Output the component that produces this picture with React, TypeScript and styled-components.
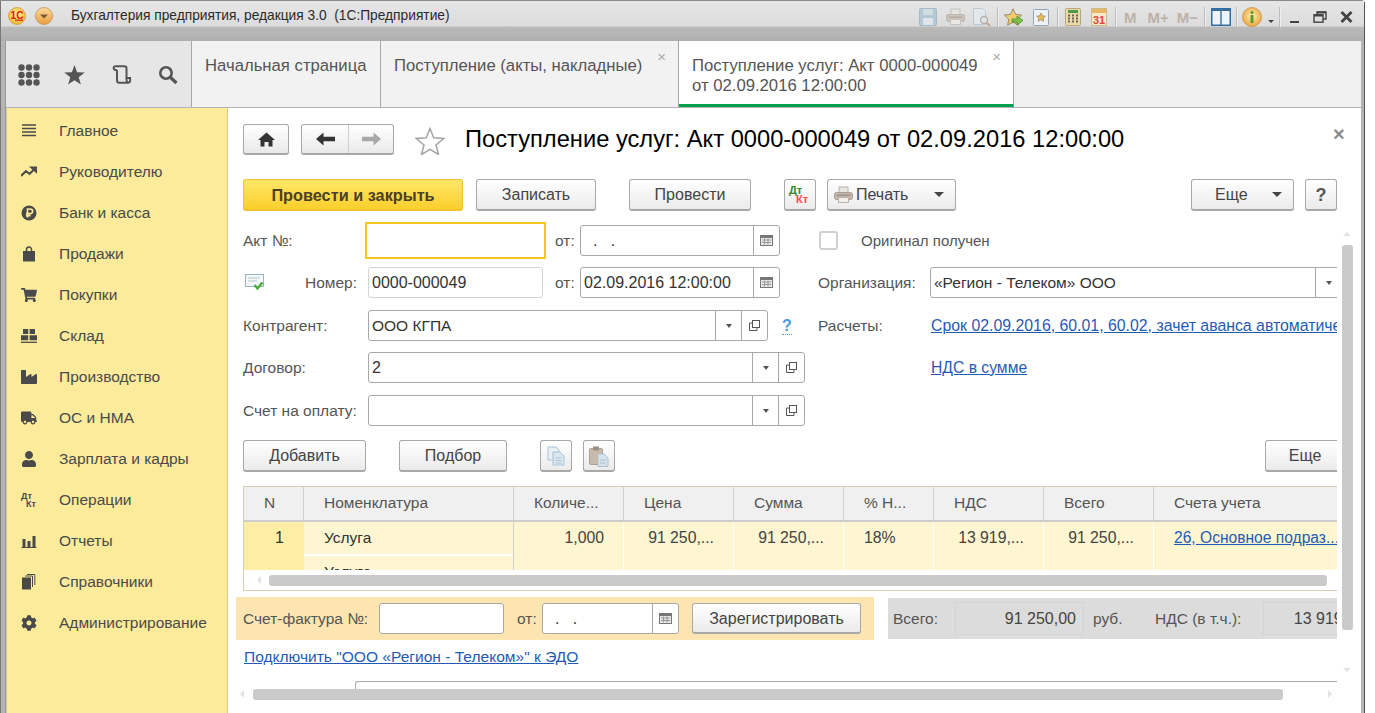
import React from "react";
import styled, { createGlobalStyle } from "styled-components";
import { FaCog, FaIndustry, FaShoppingCart, FaTruck, FaUser } from "react-icons/fa";

const GlobalStyle = createGlobalStyle`
  html, body {
    margin: 0;
    padding: 0;
    background: #fff;
    overflow: hidden;
  }
  body {
    font-family: "Liberation Sans", Arial, sans-serif;
    font-size: 15.5px;
    color: #4a4a4a;
  }
`;

/* ---- icons ---- */

const Svg = ({ w = 16, h = 16, vb, children }: { w?: number; h?: number; vb?: string; children: React.ReactNode }) => (
  <svg width={w} height={h} viewBox={vb ?? `0 0 ${w} ${h}`} style={{ display: "block", flex: "none" }}>
    {children}
  </svg>
);

const LogoIcon = () => (
  <Svg w={18} h={18}>
    <defs>
      <radialGradient id="logoBg" cx="50%" cy="40%" r="60%">
        <stop offset="0" stopColor="#fff09a" />
        <stop offset="1" stopColor="#f5b62a" />
      </radialGradient>
    </defs>
    <circle cx="9" cy="9" r="8.5" fill="url(#logoBg)" stroke="#c9882b" strokeWidth="0.6" />
    <text x="9" y="12" textAnchor="middle" fontFamily="Liberation Sans" fontWeight="700" fontSize="10" fill="#d3211a">1С</text>
    <path d="M7 13.200h8" stroke="#d3211a" strokeWidth="1.200" />
  </Svg>
);

const MenuArrowIcon = () => (
  <Svg w={18} h={18}>
    <defs>
      <linearGradient id="menuBg" x1="0" y1="0" x2="0" y2="1">
        <stop offset="0" stopColor="#fbd9a0" />
        <stop offset="1" stopColor="#eb9f3e" />
      </linearGradient>
    </defs>
    <circle cx="9" cy="9" r="8.5" fill="url(#menuBg)" stroke="#bd8b4d" strokeWidth="0.7" />
    <path d="M5 7.5h8L9 11.5z" fill="#7a5a34" />
  </Svg>
);

const SaveIcon = () => (
  <Svg w={18} h={18}>
    <rect x="0.5" y="0.5" width="17" height="17" rx="1" fill="#9dbcd2" stroke="#86a7bf" />
    <rect x="4" y="1" width="10" height="6" fill="#c8d9e4" />
    <rect x="4" y="10" width="10" height="7" fill="#dfe8ee" />
  </Svg>
);

const PrintIcon = ({ w = 19, h = 18 }: { w?: number; h?: number }) => (
  <Svg w={w} h={h} vb="0 0 19 18">
    <rect x="5" y="1" width="9" height="6" fill="#e9e6e2" stroke="#b9b3ac" />
    <rect x="0.5" y="6.5" width="18" height="7" rx="2" fill="#c4b8ac" stroke="#ab9f94" />
    <rect x="4.5" y="11.5" width="10" height="5" fill="#f2f0ed" stroke="#b9b3ac" />
    <rect x="2.5" y="8.5" width="14" height="1.5" fill="#9b9188" />
  </Svg>
);

const PreviewIcon = () => (
  <Svg w={19} h={19}>
    <path d="M1.5.5h9l3 3v13h-12z" fill="#e5edf3" stroke="#a8bccb" />
    <circle cx="12" cy="12" r="3.5" fill="#dfe5e8" stroke="#a1958a" strokeWidth="1.3" />
    <path d="M14.5 14.5l3.5 3.5" stroke="#a98a72" strokeWidth="2" />
  </Svg>
);

const StarArrowIcon = () => (
  <Svg w={20} h={19}>
    <path d="M9 .8l2.6 5.6 6 .7-4.4 4.1 1.2 6-5.4-3-5.4 3 1.2-6L.4 7.1l6-.7z" fill="#f2cf6b" stroke="#8a8266" strokeWidth="0.9" />
    <path d="M8 11h5V8l6 4.5-6 4.5v-3H8z" fill="#7fc24a" stroke="#4d8a2c" strokeWidth="0.8" />
  </Svg>
);

const DocStarIcon = () => (
  <Svg w={16} h={18}>
    <rect x="0.5" y="1.5" width="15" height="16" rx="1" fill="#eef2f5" stroke="#8fa6b8" />
    <path d="M8 5l1.4 2.8 3 .4-2.2 2.1.6 3L8 11.8l-2.8 1.5.6-3-2.2-2.1 3-.4z" fill="#e6bd55" stroke="#8a7a50" strokeWidth="0.6" />
  </Svg>
);

const CalcIcon = () => (
  <Svg w={16} h={18}>
    <rect x="0.5" y="0.5" width="15" height="17" rx="1" fill="#ecd9a8" stroke="#b8a67a" />
    <rect x="3" y="2" width="10" height="3" fill="#4c9a4c" />
    <path d="M3 7.5h2M7 7.5h2M11 7.5h2M3 10.5h2M7 10.5h2M11 10.5h2M3 13.5h2M7 13.5h2M11 13.5h2" stroke="#6d6455" strokeWidth="2" />
  </Svg>
);

const CalendarIcon = () => (
  <Svg w={16} h={18}>
    <rect x="0.5" y="0.5" width="15" height="17" fill="#f6e9cc" stroke="#cdb98e" />
    <rect x="1" y="1" width="14" height="4" fill="#e8b765" />
    <text x="8" y="15.5" textAnchor="middle" fontFamily="Liberation Sans" fontWeight="700" fontSize="11" fill="#e4432d">31</text>
  </Svg>
);

const PaneIcon = () => (
  <Svg w={20} h={18}>
    <rect x="0.75" y="0.75" width="18.5" height="16.5" fill="#eef4f9" stroke="#356f9f" strokeWidth="1.5" />
    <rect x="1" y="1" width="18" height="2" fill="#356f9f" />
    <path d="M10 2v15" stroke="#356f9f" strokeWidth="1.4" />
  </Svg>
);

const InfoIcon = () => (
  <Svg w={20} h={20}>
    <defs>
      <radialGradient id="infoBg" cx="50%" cy="45%" r="60%">
        <stop offset="0" stopColor="#fdeeb4" />
        <stop offset="1" stopColor="#eaa136" />
      </radialGradient>
    </defs>
    <circle cx="10" cy="10" r="9.5" fill="url(#infoBg)" stroke="#c48d3c" strokeWidth="0.7" />
    <circle cx="10" cy="5.5" r="1.5" fill="#5b9b2d" />
    <rect x="8.5" y="8" width="3" height="8" rx="0.5" fill="#5b9b2d" />
  </Svg>
);

const RestoreIcon = () => (
  <Svg w={14} h={12}>
    <path d="M4 3V1h9v7h-3" fill="none" stroke="#444" strokeWidth="1.4" />
    <rect x="1" y="3.7" width="9" height="7.5" fill="none" stroke="#444" strokeWidth="1.4" />
    <path d="M1 4.5h9M4 1.5h9" stroke="#444" strokeWidth="2" />
  </Svg>
);

const WindowCloseIcon = () => (
  <Svg w={13} h={12}>
    <path d="M1.500 1l10 10M11.500 1l-10 10" stroke="#444" strokeWidth="2.800" />
  </Svg>
);

const DotsIcon = () => (
  <Svg w={22} h={22}>
    {[3.5, 11, 18.5].map((y) =>
      [3.5, 11, 18.5].map((x) => <circle key={`${x}-${y}`} cx={x} cy={y} r="3.2" fill="#555" />)
    )}
  </Svg>
);

const PanelStarIcon = () => (
  <Svg w={21} h={20}>
    <path d="M10.5 0l2.6 7.3 7.7.2-6.1 4.7 2.2 7.4-6.4-4.4-6.4 4.4 2.2-7.4L.2 7.5l7.7-.2z" fill="#555" />
  </Svg>
);

const ScrollIcon = () => (
  <Svg w={20} h={20}>
    <path d="M4 1.2h8.5a2 2 0 0 1 2 2V15a2.6 2.6 0 0 0 2.6 2.7H7.5A2.5 2.5 0 0 1 5 15.2V5M4 1.2a2 2 0 0 0-2.4 2c0 1.2 1 1.9 3.4 1.8M14.5 13h3.6v2.2a2.4 2.4 0 0 1-1 2.5" fill="none" stroke="#555" strokeWidth="2" />
  </Svg>
);

const SearchIcon = () => (
  <Svg w={20} h={20}>
    <circle cx="8" cy="8" r="5.7" fill="none" stroke="#555" strokeWidth="2.6" />
    <path d="M12.5 12.5l6 5.5" stroke="#555" strokeWidth="3.2" />
  </Svg>
);

const HomeIcon = () => (
  <Svg w={17} h={15}>
    <path d="M8.5.5L17 8h-2.5v6.5H10.5v-4.5h-4v4.5H2.5V8H0z" fill="#333" />
  </Svg>
);

const ArrowIcon = ({ back }: { back?: boolean }) => (
  <Svg w={19} h={14}>
    {back ? (
      <path d="M0 7l7.5-6.5v4.2H19v4.6H7.5v4.2z" fill="#333" />
    ) : (
      <path d="M19 7l-7.5-6.5v4.2H0v4.6h11.5v4.2z" fill="#a8a8a8" />
    )}
  </Svg>
);

const BigStarIcon = () => (
  <Svg w={30} h={28}>
    <path d="M15 1.5l3.7 9.3 10 .7-7.7 6.4 2.5 9.6L15 22.3l-8.5 5.2 2.5-9.6-7.7-6.4 10-.7z" fill="#fff" stroke="#a4a4a4" strokeWidth="1.5" />
  </Svg>
);

const StatusIcon = () => (
  <Svg w={19} h={17}>
    <rect x="0.5" y="0.5" width="18" height="12" fill="#f4f8fb" stroke="#9db3c4" />
    <path d="M3 4h12M3 7h9" stroke="#b5c5d1" />
    <path d="M9.5 11l3 3.5 5-6" fill="none" stroke="#4cab3a" strokeWidth="2.4" />
  </Svg>
);

const CalendarCellIcon = () => (
  <Svg w={13} h={11}>
    <rect x="0.5" y="0.5" width="12" height="10" fill="#e8e8e8" stroke="#777" />
    <rect x="1" y="1" width="11" height="2" fill="#777" />
    <path d="M2 5h9M2 7.5h9M4.5 3.5v6M8 3.5v6" stroke="#999" />
  </Svg>
);

const OpenIcon = () => (
  <Svg w={11} h={11}>
    <rect x="3.5" y="0.5" width="7" height="7" fill="#fff" stroke="#555" />
    <path d="M3 3H.5v7.5H8V8" fill="none" stroke="#555" />
  </Svg>
);

const CopyIcon = () => (
  <Svg w={18} h={20}>
    <path d="M1 1h8l3 3v10H1z" fill="#e8f0f5" stroke="#a9c3d4" />
    <path d="M6 6h7l4 4v9H6z" fill="#dbe8ef" stroke="#a9c3d4" />
    <path d="M8.5 12h6M8.5 14.5h6M8.5 17h6" stroke="#a9c3d4" />
  </Svg>
);

const PasteIcon = () => (
  <Svg w={20} h={21}>
    <rect x="0.5" y="2.5" width="13" height="16" rx="1" fill="#c9b9ab" stroke="#ad9e90" />
    <rect x="4" y="0.5" width="6" height="4" fill="#9a8f85" />
    <path d="M9 8h6l4 4v8.5H9z" fill="#d5e3ec" stroke="#aac2d2" />
    <path d="M11 14h6M11 17h6" stroke="#aac2d2" />
  </Svg>
);

const ListIcon = () => (
  <Svg w={16} h={16}>
    <path d="M1 2h14M1 5.5h14M1 9h14M1 12.5h14" stroke="#4a4a4a" strokeWidth="1.7" />
  </Svg>
);

const TrendIcon = () => (
  <Svg w={16} h={16}>
    <path d="M0 12l5-5 3.5 3L14 4.5M10.5 3.5H15.5V8z" fill="none" stroke="#4a4a4a" strokeWidth="2" />
  </Svg>
);

const RubleIcon = () => (
  <Svg w={16} h={16}>
    <circle cx="8" cy="8" r="7.5" fill="#4a4a4a" />
    <path d="M6.5 12.5V4h2.8a2.2 2.2 0 0 1 0 4.6H5M5 10.6h4.5" fill="none" stroke="#fbeb9a" strokeWidth="1.6" />
  </Svg>
);

const BagIcon = () => (
  <Svg w={16} h={16}>
    <path d="M2 5h12v10.5H2z" fill="#4a4a4a" />
    <path d="M5.5 7V3.5a2.5 2.5 0 0 1 5 0V7" fill="none" stroke="#4a4a4a" strokeWidth="1.5" />
  </Svg>
);

const WarehouseIcon = () => (
  <Svg w={16} h={16}>
    <path d="M2 1h5.2v5H2zM8.6 1H14v5H8.6zM0 7.2h7.2v5H0zM8.6 7.2H16v5H8.6z" fill="#4a4a4a" />
    <path d="M0 14.3h16" stroke="#4a4a4a" strokeWidth="1.3" />
  </Svg>
);

const BarsIcon = () => (
  <Svg w={16} h={16}>
    <path d="M1.5 6h3v8h-3zM6.5 8h3v6h-3zM11.500 3h3v11h-3zM0.500 14h15v1h-15z" fill="#4a4a4a" />
  </Svg>
);

const DocsIcon = () => (
  <Svg w={16} h={16}>
    <rect x="1" y="3.500" width="9" height="12" fill="#4a4a4a" />
    <path d="M11.500 13V2H4M13.800 11V.5H6" fill="none" stroke="#4a4a4a" strokeWidth="1" />
  </Svg>
);

/* ---- window chrome ---- */

const Screen = styled.div`
  width: 1375px;
  height: 713px;
  overflow: hidden;
  background: #fff;
`;

const Window = styled.div`
  width: 1365px;
  height: 713px;
  display: flex;
  flex-direction: column;
  background: #b4b4b4;
  border-left: 1px solid #777;
  border-right: 1px solid #555;
  border-top: 1px solid #8a8a8a;
  box-sizing: border-box;
  border-top-right-radius: 4px;
`;

const TitleBar = styled.div`
  height: 40px;
  flex: none;
  display: flex;
  align-items: flex-start;
  padding-top: 6px;
  box-sizing: border-box;
  background: linear-gradient(#e6e6e6 0, #dcdcdc 62%, #bababa 66%, #aeaeae 100%);
`;

const TitleText = styled.div`
  margin-left: 18px;
  margin-top: 1px;
  font-size: 13.75px;
  line-height: 15px;
  color: #2b2b2b;
  white-space: pre;
`;

const TitleTools = styled.div`
  margin-left: auto;
  display: flex;
  align-items: center;
  height: 20px;
  margin-right: 11px;
`;

const TitleTool = styled.div<{ $ml: number; $dim?: boolean }>`
  margin-left: ${(p) => p.$ml}px;
  display: flex;
  align-items: center;
  opacity: ${(p) => (p.$dim ? 0.65 : 1)};
`;

const TitleSep = styled.div<{ $ml: number }>`
  width: 1px;
  height: 20px;
  margin-left: ${(p) => p.$ml}px;
  background: #bdbdbd;
  box-shadow: 1px 0 0 #efefef;
`;

const MemoLabel = styled.span<{ $ml: number }>`
  margin-left: ${(p) => p.$ml}px;
  font-size: 15px;
  font-weight: 700;
  color: #bdb1a8;
`;

const DropCaret = styled.div<{ $ml: number }>`
  margin-left: ${(p) => p.$ml}px;
  margin-top: 8px;
  width: 0;
  height: 0;
  border-left: 3.500px solid transparent;
  border-right: 3.500px solid transparent;
  border-top: 3.500px solid #444;
`;

const MinimizeGlyph = styled.div<{ $ml: number }>`
  margin-left: ${(p) => p.$ml}px;
  margin-top: 9px;
  width: 9px;
  height: 2px;
  background: #444;
`;

const Body = styled.div`
  flex: 1;
  min-height: 0;
  display: flex;
  flex-direction: column;
  margin: 0 3px 0 4px;
  border-left: 1px solid #9b9b9b;
  background: #fff;
`;

const TabBar = styled.div`
  height: 67px;
  flex: none;
  display: flex;
  background: #f0f0f0;
  border-bottom: 1px solid #b4b4b4;
  box-sizing: border-box;
`;

const PanelTools = styled.div`
  width: 186px;
  flex: none;
  display: flex;
  align-items: center;
  padding-left: 12px;
  box-sizing: border-box;
  background: #e6e6e6;
  border-right: 1px solid #a6a6a6;
`;

const PanelTool = styled.div<{ $ml: number }>`
  margin-left: ${(p) => p.$ml}px;
  margin-top: 1px;
`;

const Tab = styled.div<{ $w: number; $active?: boolean }>`
  position: relative;
  width: ${(p) => p.$w}px;
  flex: none;
  box-sizing: border-box;
  padding: 15px 0 0 13px;
  line-height: 20px;
  font-size: 16.7px;
  color: #555;
  white-space: nowrap;
  background: ${(p) => (p.$active ? "#fff" : "#f2f2f2")};
  border-right: 1px solid #a6a6a6;
  border-bottom: ${(p) => (p.$active ? "3px solid #00a04f" : "none")};
`;

const TabClose = styled.span<{ $right: number }>`
  position: absolute;
  top: 7px;
  right: ${(p) => p.$right}px;
  font-size: 15px;
  line-height: 17px;
  color: #aaa;
`;

const Main = styled.div`
  flex: 1;
  min-height: 0;
  display: flex;
`;

const Sidebar = styled.div`
  width: 222px;
  flex: none;
  box-sizing: border-box;
  padding-top: 2px;
  background: #fbeb9a;
  border-left: 1px solid #c9c9a0;
  border-right: 1px solid #d8cc88;
`;

const MenuItem = styled.div`
  height: 41px;
  display: flex;
  align-items: center;
  color: #4a4a4a;
  font-size: 15.5px;
  white-space: nowrap;
`;

const MenuIcon = styled.div`
  width: 52px;
  flex: none;
  display: flex;
  justify-content: center;
  padding-right: 8px;
  box-sizing: border-box;
  color: #4a4a4a;
  font-size: 16px;
`;

const DtKtText = styled.div`
  width: 16px;
  height: 16px;
  font-size: 9px;
  font-weight: 700;
  line-height: 8px;
  color: #4a4a4a;
  & > span:last-child {
    display: block;
    padding-left: 5px;
  }
`;

/* ---- content ---- */

const Content = styled.div`
  position: relative;
  flex: 1;
  min-width: 0;
  display: flex;
  flex-direction: column;
  background: #fff;
`;

const HeaderRow = styled.div`
  height: 31px;
  margin: 16px 0 0 15px;
  display: flex;
  align-items: center;
  flex: none;
`;

const NavGroup = styled.div<{ $ml?: number }>`
  display: flex;
  height: 31px;
  margin-left: ${(p) => p.$ml ?? 0}px;
  box-sizing: border-box;
  border: 1px solid #a8a8a8;
  border-bottom-width: 2px;
  border-radius: 3px;
  background: linear-gradient(#fff, #e9e9e9);
`;

const NavCell = styled.div<{ $w: number; $split?: boolean }>`
  width: ${(p) => p.$w}px;
  display: flex;
  align-items: center;
  justify-content: center;
  box-sizing: border-box;
  border-left: ${(p) => (p.$split ? "1px solid #cfcfcf" : "none")};
`;

const StarSlot = styled.div`
  margin-left: 21px;
  margin-top: 3px;
`;

const PageTitle = styled.div`
  margin-left: 20px;
  margin-top: -1px;
  font-size: 23.7px;
  line-height: 30px;
  color: #000;
  white-space: nowrap;
`;

const PageClose = styled.div`
  position: absolute;
  top: 15px;
  left: 1105px;
  font-size: 20px;
  font-weight: 700;
  line-height: 22px;
  color: #8c8c8c;
`;

const CommandBar = styled.div`
  width: 1094px;
  height: 32px;
  margin: 24px 0 0 15px;
  display: flex;
  flex: none;
`;

const Button = styled.div<{ $w: number; $ml?: number; $auto?: boolean }>`
  width: ${(p) => p.$w}px;
  height: 32px;
  flex: none;
  margin-left: ${(p) => (p.$auto ? "auto" : `${p.$ml ?? 0}px`)};
  padding-top: 1px;
  display: flex;
  align-items: center;
  justify-content: center;
  box-sizing: border-box;
  border: 1px solid #a8a8a8;
  border-bottom-width: 2px;
  border-radius: 3px;
  background: linear-gradient(#fff, #ebebeb);
  font-size: 16px;
  color: #444;
`;

const PrimaryButton = styled(Button)`
  border-color: #f3c230;
  background: linear-gradient(#fee768, #fbcf2c);
  font-size: 16.3px;
  font-weight: 700;
  color: #4a4028;
`;

const MenuButton = styled(Button)`
  justify-content: flex-start;
  position: relative;
`;

const HelpButton = styled(Button)`
  font-size: 18px;
  font-weight: 700;
  color: #555;
`;

const PrinterSlot = styled.span`
  margin: 0 3px 0 6px;
`;

const MoreText = styled.span`
  margin-left: 23px;
`;

const ButtonCaret = styled.span<{ $left: number }>`
  position: absolute;
  left: ${(p) => p.$left}px;
  top: 12px;
  width: 0;
  height: 0;
  border-left: 5px solid transparent;
  border-right: 5px solid transparent;
  border-top: 5px solid #444;
`;

const DtKtBadge = styled.div`
  font-size: 11px;
  font-weight: 700;
  line-height: 9px;
  width: 22px;
  color: #2d8a35;
  & > span:last-child {
    display: block;
    padding-left: 7px;
    color: #f05050;
  }
`;

const Scroller = styled.div`
  flex: 1;
  min-height: 0;
  width: 1101px;
  margin: 10px 0 0 8px;
  padding: 4px 0 0 7px;
  box-sizing: border-box;
  overflow: hidden;
`;

const Row = styled.div`
  height: 31px;
  display: flex;
  align-items: center;
  white-space: nowrap;
  margin-top: 11px;
  &:nth-child(odd) {
    margin-top: 12px;
  }
  &:first-child {
    margin-top: 0;
  }
`;

const LeftBlock = styled.div`
  width: 575px;
  flex: none;
  height: 100%;
  display: flex;
  align-items: center;
`;

const RightBlock = styled.div<{ $ml?: number }>`
  flex: 1;
  min-width: 0;
  height: 100%;
  display: flex;
  align-items: center;
  margin-left: ${(p) => p.$ml ?? 0}px;
`;

const Label = styled.div<{ $w: number }>`
  width: ${(p) => p.$w}px;
  flex: none;
  color: #555;
  font-size: 15.5px;
`;

const Field = styled.div<{ $w: number; $soft?: boolean }>`
  width: ${(p) => p.$w}px;
  height: 31px;
  flex: none;
  display: flex;
  box-sizing: border-box;
  border: 1px solid ${(p) => (p.$soft ? "#d4d4d4" : "#a8a8a8")};
  border-radius: 3px;
  background: #fff;
`;

const FocusField = styled(Field)`
  height: 37px;
  border: 2px solid #f6c522;
  border-radius: 0;
`;

const FieldText = styled.div<{ $pad?: number; $digits?: boolean }>`
  flex: 1;
  min-width: 0;
  line-height: 29px;
  padding-left: ${(p) => p.$pad ?? 3}px;
  font-size: ${(p) => (p.$digits ? 16 : 15.5)}px;
  color: #333;
  white-space: pre;
`;

const FieldCell = styled.div<{ $w: number }>`
  width: ${(p) => p.$w}px;
  flex: none;
  display: flex;
  align-items: center;
  justify-content: center;
  box-sizing: border-box;
  border-left: 1px solid #a8a8a8;
`;

const TinyCaret = styled.span`
  width: 0;
  height: 0;
  border-left: 3.500px solid transparent;
  border-right: 3.500px solid transparent;
  border-top: 4px solid #555;
`;

const DateLabel = styled.div<{ $ml: number }>`
  width: 25px;
  flex: none;
  margin-left: ${(p) => p.$ml}px;
  color: #555;
`;

const HelpMark = styled.div`
  margin-left: 14px;
  font-size: 16px;
  font-weight: 700;
  color: #4a9ad8;
  border-bottom: 1px dotted #4a9ad8;
  line-height: 17px;
`;

const StatusSlot = styled.div`
  width: 62px;
  flex: none;
  padding-left: 2px;
  box-sizing: border-box;
`;

const Checkbox = styled.div`
  width: 19px;
  height: 19px;
  margin-left: 1px;
  box-sizing: border-box;
  border: 2px solid #d0d0d0;
  border-radius: 3px;
  background: #fff;
`;

const CheckLabel = styled.div`
  margin-left: 23px;
  font-size: 15px;
  color: #555;
`;

const FormLink = styled.a<{ $size?: number }>`
  display: block;
  margin-left: 1px;
  color: #1f5bb5;
  text-decoration: underline;
  font-size: ${(p) => p.$size ?? 15.7}px;
  white-space: nowrap;
  overflow: hidden;
`;

const ListBar = styled.div`
  height: 32px;
  margin-top: 14px;
  display: flex;
`;

const ClippedButton = styled(Button)`
  margin-right: -12px;
  padding-right: 4px;
`;

const Table = styled.div`
  height: 105px;
  margin-top: 14px;
  box-sizing: border-box;
  border-top: 1px solid #d5ceb0;
  border-bottom: 1px solid #d5ceb0;
  border-left: 1px solid #d5ceb0;
  overflow: hidden;
`;

const TableHead = styled.div`
  display: grid;
  grid-template-columns: 60px 210px 110px 110px 110px 90px 110px 110px 195px;
  height: 35px;
  box-sizing: border-box;
  background: #f0f0f0;
  border-bottom: 2px solid #cdcdcd;
`;

const HeadCell = styled.div`
  line-height: 32px;
  padding-left: 20px;
  color: #555;
  font-size: 15.5px;
  box-sizing: border-box;
  border-right: 1px solid #d0d0d0;
  overflow: hidden;
  white-space: nowrap;
`;

const TableBody = styled.div`
  display: grid;
  grid-template-columns: 60px 210px 110px 110px 110px 90px 110px 110px 195px;
  height: 48px;
  overflow: hidden;
`;

const NumberCell = styled.div`
  background: #fdeea6;
  text-align: right;
  padding: 7px 20px 0 0;
  font-size: 16px;
  color: #333;
  box-sizing: border-box;
`;

const NameCell = styled.div`
  background: #fdf6d0;
  border-right: 1px solid #d0d0d0;
  box-sizing: border-box;
`;

const NameLine = styled.div`
  height: 32px;
  line-height: 32px;
  padding-left: 20px;
  box-sizing: border-box;
  color: #333;
  & + & {
    border-top: 2px solid #fff;
  }
`;

const ValueCell = styled.div<{ $left?: boolean }>`
  background: #fdf6d0;
  border-right: 1px solid #fff;
  box-sizing: border-box;
  padding: 7px ${(p) => (p.$left ? "0 0 20px" : "19px 0 0")};
  text-align: ${(p) => (p.$left ? "left" : "right")};
  font-size: 15.8px;
  color: #444;
  white-space: nowrap;
  overflow: hidden;
`;

const CellLink = styled.a`
  color: #1f5bb5;
  font-size: 15.6px;
  text-decoration: underline;
`;

const TableScroll = styled.div`
  height: 20px;
  display: flex;
  align-items: center;
  background: #fff;
`;

const ScrollArrow = styled.span`
  width: 0;
  height: 0;
  margin: 0 8px 0 13px;
  border: 4px solid transparent;
  border-right-color: #e2e2e2;
  border-left-width: 0;
`;

const ScrollThumb = styled.div<{ $w: number }>`
  width: ${(p) => p.$w}px;
  height: 11px;
  border-radius: 3px;
  background: #cacaca;
`;

const BottomBand = styled.div`
  margin: 6px 0 0 -7px;
  height: 43px;
  display: flex;
`;

const InvoicePanel = styled.div`
  width: 638px;
  height: 43px;
  flex: none;
  display: flex;
  align-items: center;
  box-sizing: border-box;
  padding-left: 7px;
  background: #fde5b2;
`;

const InvoiceButton = styled(Button)`
  height: 31px;
  margin-left: 13px;
`;

const TotalsPanel = styled.div`
  margin: 1px 0 0 14px;
  flex: 1;
  min-width: 0;
  height: 41px;
  display: flex;
  align-items: center;
  background: #dcdcdc;
  overflow: hidden;
  white-space: nowrap;
`;

const TotalsLabel = styled.div<{ $w: number; $pl: number }>`
  width: ${(p) => p.$w}px;
  flex: none;
  padding-left: ${(p) => p.$pl}px;
  box-sizing: border-box;
  color: #555;
`;

const TotalsValue = styled.div<{ $w: number }>`
  width: ${(p) => p.$w}px;
  flex: none;
  height: 33px;
  line-height: 31px;
  padding-right: 7px;
  box-sizing: border-box;
  text-align: right;
  font-size: 16px;
  color: #444;
  border: 1px solid #d4d4d4;
`;

const EdoLink = styled(FormLink)`
  margin: 8px 0 0 1px;
  height: 18px;
  line-height: 18px;
`;

const CutField = styled.div`
  margin: 15px 0 0 112px;
  height: 12px;
  border-top: 1px solid #a8a8a8;
  border-left: 1px solid #a8a8a8;
  border-top-left-radius: 3px;
`;

const VerticalBar = styled.div`
  position: absolute;
  left: 1114px;
  top: 137px;
  width: 11px;
  height: 385px;
  border-radius: 3px;
  background: #cacaca;
`;

const HorizontalBar = styled.div`
  position: absolute;
  left: 25px;
  top: 581px;
  width: 1030px;
  height: 11px;
  border-radius: 3px;
  background: #cacaca;
`;

const ArrowMark = styled.span<{ $left: number; $top: number; $dir: "up" | "down" | "left" | "right" }>`
  position: absolute;
  left: ${(p) => p.$left}px;
  top: ${(p) => p.$top}px;
  width: 0;
  height: 0;
  border: 4px solid transparent;
  ${(p) => (p.$dir === "up" ? "border-bottom-color" : p.$dir === "down" ? "border-top-color" : p.$dir === "left" ? "border-right-color" : "border-left-color")}: #e2e2e2;
`;

const menu: [string, React.ReactNode][] = [
  ["Главное", <ListIcon />],
  ["Руководителю", <TrendIcon />],
  ["Банк и касса", <RubleIcon />],
  ["Продажи", <BagIcon />],
  ["Покупки", <FaShoppingCart />],
  ["Склад", <WarehouseIcon />],
  ["Производство", <FaIndustry />],
  ["ОС и НМА", <FaTruck />],
  ["Зарплата и кадры", <FaUser />],
  ["Операции", <DtKtText><span>Дт</span><span>Кт</span></DtKtText>],
  ["Отчеты", <BarsIcon />],
  ["Справочники", <DocsIcon />],
  ["Администрирование", <FaCog />],
];

const columns = ["N", "Номенклатура", "Количе...", "Цена", "Сумма", "% Н...", "НДС", "Всего", "Счета учета"];

const DateField = ({ w = 200, value }: { w?: number; value?: string }) => (
  <Field $w={w}>
    <FieldText $pad={value ? 3 : 12} $digits>{value ?? ".   ."}</FieldText>
    <FieldCell $w={26}>
      <CalendarCellIcon />
    </FieldCell>
  </Field>
);

const App = () => {
  return (
    <Screen>
      <GlobalStyle />
      <Window>
        <TitleBar>
          <TitleTool $ml={7}><LogoIcon /></TitleTool>
          <TitleTool $ml={9}><MenuArrowIcon /></TitleTool>
          <TitleText>{"Бухгалтерия предприятия, редакция 3.0  (1С:Предприятие)"}</TitleText>
          <TitleTools>
            <TitleTool $ml={0} $dim><SaveIcon /></TitleTool>
            <TitleTool $ml={9} $dim><PrintIcon /></TitleTool>
            <TitleTool $ml={7} $dim><PreviewIcon /></TitleTool>
            <TitleSep $ml={6} />
            <TitleTool $ml={6}><StarArrowIcon /></TitleTool>
            <TitleTool $ml={9}><DocStarIcon /></TitleTool>
            <TitleSep $ml={8} />
            <TitleTool $ml={7}><CalcIcon /></TitleTool>
            <TitleTool $ml={10}><CalendarIcon /></TitleTool>
            <TitleSep $ml={8} />
            <MemoLabel $ml={8}>M</MemoLabel>
            <MemoLabel $ml={11}>M+</MemoLabel>
            <MemoLabel $ml={8}>M−</MemoLabel>
            <TitleSep $ml={6} />
            <TitleTool $ml={6}><PaneIcon /></TitleTool>
            <TitleSep $ml={5} />
            <TitleTool $ml={5}><InfoIcon /></TitleTool>
            <DropCaret $ml={6} />
            <TitleSep $ml={5} />
            <MinimizeGlyph $ml={10} />
            <TitleTool $ml={14}><RestoreIcon /></TitleTool>
            <TitleTool $ml={13}><WindowCloseIcon /></TitleTool>
          </TitleTools>
        </TitleBar>
        <Body>
          <TabBar>
            <PanelTools>
              <PanelTool $ml={0}><DotsIcon /></PanelTool>
              <PanelTool $ml={24}><PanelStarIcon /></PanelTool>
              <PanelTool $ml={27}><ScrollIcon /></PanelTool>
              <PanelTool $ml={26}><SearchIcon /></PanelTool>
            </PanelTools>
            <Tab $w={189}>Начальная страница</Tab>
            <Tab $w={298}>
              Поступление (акты, накладные)
              <TabClose $right={12}>×</TabClose>
            </Tab>
            <Tab $w={335} $active>
              Поступление услуг: Акт 0000-000049
              <br />
              от 02.09.2016 12:00:00
              <TabClose $right={12}>×</TabClose>
            </Tab>
          </TabBar>
          <Main>
            <Sidebar>
              {menu.map(([text, icon]) => (
                <MenuItem key={text}>
                  <MenuIcon>{icon}</MenuIcon>
                  {text}
                </MenuItem>
              ))}
            </Sidebar>
            <Content>
              <HeaderRow>
                <NavGroup>
                  <NavCell $w={44}><HomeIcon /></NavCell>
                </NavGroup>
                <NavGroup $ml={12}>
                  <NavCell $w={46}><ArrowIcon back /></NavCell>
                  <NavCell $w={45} $split><ArrowIcon /></NavCell>
                </NavGroup>
                <StarSlot><BigStarIcon /></StarSlot>
                <PageTitle>Поступление услуг: Акт 0000-000049 от 02.09.2016 12:00:00</PageTitle>
              </HeaderRow>
              <PageClose>×</PageClose>
              <CommandBar>
                <PrimaryButton $w={220}>Провести и закрыть</PrimaryButton>
                <Button $w={120} $ml={13}>Записать</Button>
                <Button $w={122} $ml={33}>Провести</Button>
                <Button $w={32} $ml={33}>
                  <DtKtBadge><span>Дт</span><span>Кт</span></DtKtBadge>
                </Button>
                <MenuButton $w={129} $ml={11}>
                  <PrinterSlot><PrintIcon /></PrinterSlot>
                  Печать
                  <ButtonCaret $left={106} />
                </MenuButton>
                <MenuButton $w={103} $auto>
                  <MoreText>Еще</MoreText>
                  <ButtonCaret $left={80} />
                </MenuButton>
                <HelpButton $w={32} $ml={11}>?</HelpButton>
              </CommandBar>
              <Scroller>
                <Row>
                  <LeftBlock>
                    <Label $w={122}>Акт №:</Label>
                    <FocusField $w={181} />
                    <DateLabel $ml={9}>от:</DateLabel>
                    <DateField />
                  </LeftBlock>
                  <RightBlock>
                    <Checkbox />
                    <CheckLabel>Оригинал получен</CheckLabel>
                  </RightBlock>
                </Row>
                <Row>
                  <LeftBlock>
                    <StatusSlot><StatusIcon /></StatusSlot>
                    <Label $w={63}>Номер:</Label>
                    <Field $w={175} $soft><FieldText $digits>0000-000049</FieldText></Field>
                    <DateLabel $ml={12}>от:</DateLabel>
                    <DateField value="02.09.2016 12:00:00" />
                  </LeftBlock>
                  <RightBlock>
                    <Label $w={112}>Организация:</Label>
                    <Field $w={412}>
                      <FieldText>«Регион - Телеком» ООО</FieldText>
                      <FieldCell $w={26}><TinyCaret /></FieldCell>
                    </Field>
                  </RightBlock>
                </Row>
                <Row>
                  <LeftBlock>
                    <Label $w={125}>Контрагент:</Label>
                    <Field $w={400}>
                      <FieldText>ООО КГПА</FieldText>
                      <FieldCell $w={26}><TinyCaret /></FieldCell>
                      <FieldCell $w={26}><OpenIcon /></FieldCell>
                    </Field>
                    <HelpMark>?</HelpMark>
                  </LeftBlock>
                  <RightBlock>
                    <Label $w={112}>Расчеты:</Label>
                    <FormLink $size={15.85}>Срок 02.09.2016, 60.01, 60.02, зачет аванса автоматически</FormLink>
                  </RightBlock>
                </Row>
                <Row>
                  <LeftBlock>
                    <Label $w={125}>Договор:</Label>
                    <Field $w={437}>
                      <FieldText $digits>2</FieldText>
                      <FieldCell $w={26}><TinyCaret /></FieldCell>
                      <FieldCell $w={26}><OpenIcon /></FieldCell>
                    </Field>
                  </LeftBlock>
                  <RightBlock $ml={112}>
                    <FormLink>НДС в сумме</FormLink>
                  </RightBlock>
                </Row>
                <Row>
                  <LeftBlock>
                    <Label $w={125}>Счет на оплату:</Label>
                    <Field $w={437}>
                      <FieldText />
                      <FieldCell $w={26}><TinyCaret /></FieldCell>
                      <FieldCell $w={26}><OpenIcon /></FieldCell>
                    </Field>
                  </LeftBlock>
                </Row>
                <ListBar>
                  <Button $w={123}>Добавить</Button>
                  <Button $w={108} $ml={33}>Подбор</Button>
                  <Button $w={32} $ml={33}><CopyIcon /></Button>
                  <Button $w={32} $ml={11}><PasteIcon /></Button>
                  <ClippedButton $w={84} $auto>Еще</ClippedButton>
                </ListBar>
                <Table>
                  <TableHead>
                    {columns.map((c) => (
                      <HeadCell key={c}>{c}</HeadCell>
                    ))}
                  </TableHead>
                  <TableBody>
                    <NumberCell>1</NumberCell>
                    <NameCell>
                      <NameLine>Услуга</NameLine>
                      <NameLine>Услуга</NameLine>
                    </NameCell>
                    <ValueCell>1,000</ValueCell>
                    <ValueCell>91 250,...</ValueCell>
                    <ValueCell>91 250,...</ValueCell>
                    <ValueCell $left>18%</ValueCell>
                    <ValueCell>13 919,...</ValueCell>
                    <ValueCell>91 250,...</ValueCell>
                    <ValueCell $left>
                      <CellLink>26, Основное подраз...</CellLink>
                    </ValueCell>
                  </TableBody>
                  <TableScroll>
                    <ScrollArrow />
                    <ScrollThumb $w={1058} />
                  </TableScroll>
                </Table>
                <BottomBand>
                  <InvoicePanel>
                    <Label $w={136}>Счет-фактура №:</Label>
                    <Field $w={125} />
                    <DateLabel $ml={13}>от:</DateLabel>
                    <DateField w={137} />
                    <InvoiceButton $w={169}>Зарегистрировать</InvoiceButton>
                  </InvoicePanel>
                  <TotalsPanel>
                    <TotalsLabel $w={67} $pl={5}>Всего:</TotalsLabel>
                    <TotalsValue $w={129}>91 250,00</TotalsValue>
                    <TotalsLabel $w={71} $pl={9}>руб.</TotalsLabel>
                    <TotalsLabel $w={108} $pl={0}>НДС (в т.ч.):</TotalsLabel>
                    <TotalsValue $w={110}>13 919,49</TotalsValue>
                  </TotalsPanel>
                </BottomBand>
                <EdoLink $size={15.55}>Подключить "ООО «Регион - Телеком»" к ЭДО</EdoLink>
                <CutField />
              </Scroller>
              <ArrowMark $left={1115} $top={120} $dir="up" />
              <VerticalBar />
              <ArrowMark $left={1115} $top={560} $dir="down" />
              <ArrowMark $left={8} $top={582} $dir="left" />
              <HorizontalBar />
              <ArrowMark $left={1100} $top={582} $dir="right" />
            </Content>
          </Main>
        </Body>
      </Window>
    </Screen>
  );
};

export default App;
